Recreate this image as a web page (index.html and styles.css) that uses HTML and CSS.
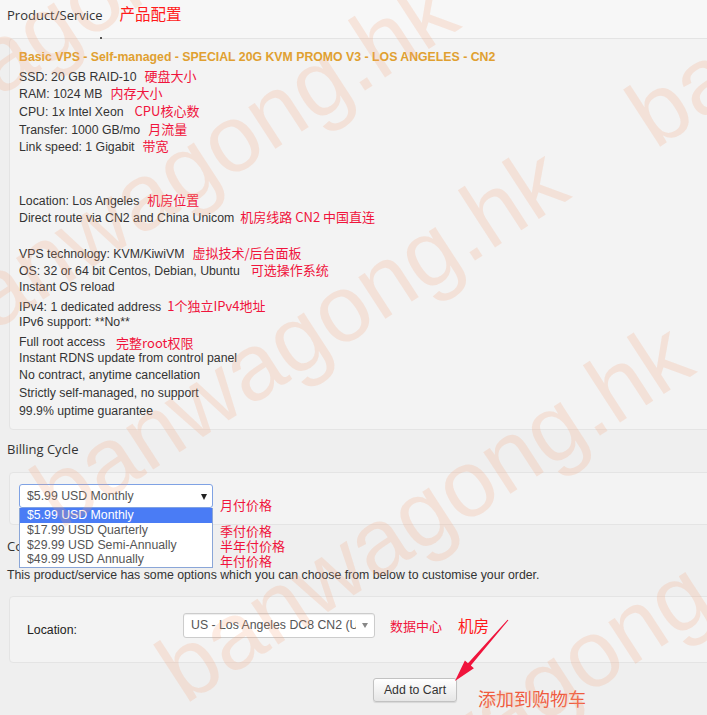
FILE: index.html
```html
<!DOCTYPE html>
<html lang="en">
<head>
<meta charset="utf-8">
<title>Product/Service</title>
<link rel="stylesheet" href="styles.css">
</head>
<body>
<div class="page">
  <div class="head">
    <h2 class="sec-title">Product/Service<span class="note note-head">产品配置</span></h2>
  </div>

  <div class="panel desc">
    <div class="line title">Basic VPS - Self-managed - SPECIAL 20G KVM PROMO V3 - LOS ANGELES - CN2</div>
    <div class="line">SSD: 20 GB RAID-10<span class="note">硬盘大小</span></div>
    <div class="line">RAM: 1024 MB<span class="note">内存大小</span></div>
    <div class="line">CPU: 1x Intel Xeon<span class="note wide">CPU核心数</span></div>
    <div class="line">Transfer: 1000 GB/mo<span class="note">月流量</span></div>
    <div class="line">Link speed: 1 Gigabit<span class="note">带宽</span></div>
    <div class="line"></div>
    <div class="line"></div>
    <div class="line">Location: Los Angeles<span class="note">机房位置</span></div>
    <div class="line">Direct route via CN2 and China Unicom<span class="note narrow">机房线路 CN2 中国直连</span></div>
    <div class="line"></div>
    <div class="line">VPS technology: KVM/KiwiVM<span class="note">虚拟技术/后台面板</span></div>
    <div class="line">OS: 32 or 64 bit Centos, Debian, Ubuntu<span class="note wide">可选操作系统</span></div>
    <div class="line">Instant OS reload</div>
    <div class="line">IPv4: 1 dedicated address<span class="note narrow">1个独立IPv4地址</span></div>
    <div class="line">IPv6 support: **No**</div>
    <div class="line">Full root access<span class="note wide low">完整root权限</span></div>
    <div class="line">Instant RDNS update from control panel</div>
    <div class="line">No contract, anytime cancellation</div>
    <div class="line">Strictly self-managed, no support</div>
    <div class="line">99.9% uptime guarantee</div>
  </div>

  <h2 class="sec-title billing-title">Billing Cycle</h2>
  <div class="panel billing">
    <div class="select-wrap">
      <div class="select select-focus">$5.99 USD Monthly<span class="caret"></span></div>
      <ul class="dropdown">
        <li class="opt opt-sel">$5.99 USD Monthly</li>
        <li class="opt">$17.99 USD Quarterly</li>
        <li class="opt">$29.99 USD Semi-Annually</li>
        <li class="opt">$49.99 USD Annually</li>
      </ul>
      <div class="price-notes">
        <span class="note">月付价格</span>
        <span class="note gap">季付价格</span>
        <span class="note">半年付价格</span>
        <span class="note">年付价格</span>
      </div>
    </div>
  </div>

  <h2 class="sec-title config-title">Configurable Options</h2>
  <p class="intro">This product/service has some options which you can choose from below to customise your order.</p>

  <div class="panel options">
    <div class="opt-label">Location:</div>
    <div class="select select-plain"><span class="select-text">US - Los Angeles DC8 CN2 (USA)</span><span class="caret caret-grey"></span></div>
    <span class="note dc-note">数据中心</span>
    <span class="note room-note">机房</span>
  </div>

  <div class="actions">
    <button class="btn" type="button">Add to Cart</button>
    <span class="note cart-note">添加到购物车</span>
  </div>

  <svg class="overlay" width="707" height="715" viewBox="0 0 707 715" aria-hidden="true">
    <g class="watermark" font-family="Liberation Sans, Arial, sans-serif" font-size="94">
      <text x="-190" y="220" transform="rotate(-33 -190 220)">banwagong.hk</text>
      <text x="-50" y="360" transform="rotate(-33 -50 360)">banwagong.hk</text>
      <text x="60" y="530" transform="rotate(-33 60 530)">banwagong.hk</text>
      <text x="185" y="705" transform="rotate(-33 185 705)">banwagong.hk</text>
      <text x="310" y="875" transform="rotate(-33 310 875)">banwagong.hk</text>
      <text x="655" y="150" transform="rotate(-33 655 150)">banwagong.hk</text>
    </g>
    <circle cx="101" cy="38" r="1" fill="#222"/>
    <polygon class="arrow" points="508.4,620.3 470.8,665.6 473.9,668.3 455,681 464.9,660.5 468,663.2 507.6,619.7"/>
  </svg>
</div>
</body>
</html>
```

FILE: styles.css
```css
html, body {
  margin: 0;
  padding: 0;
}

body {
  background: #efefef;
  overflow: hidden;
  font-family: "Liberation Sans", Arial, sans-serif;
  font-size: 12.3px;
  color: #333;
}

.page {
  position: relative;
  width: 830px;
  height: 715px;
}

.head {
  background: #f7f7f7;
  height: 38px;
}

.sec-title {
  margin: 0;
  padding-left: 7px;
  font-family: "Open Sans", "Noto Sans", sans-serif;
  font-weight: 400;
  font-size: 13px;
  line-height: 20px;
  color: #333;
}

.head .sec-title {
  padding-top: 3px;
}

.note {
  font-family: "Noto Sans CJK SC", sans-serif;
  font-size: 13px;
  color: #f0143c;
  margin-left: 8px;
}

.note.wide { margin-left: 11px; }
.note.narrow { margin-left: 6px; }
.note.low { position: relative; top: 2px; }

.note-head {
  font-size: 15.5px;
  color: #ff1a1a;
  margin-left: 17px;
}

.panel {
  margin: 0 9px;
  background: #f3f3f3;
  border: 1px solid #e4e4e4;
  border-radius: 4px;
}

.desc {
  padding: 10px 9px 9px;
}

.line {
  height: 17.7px;
  line-height: 17.7px;
  white-space: nowrap;
}

.title {
  font-weight: bold;
  color: #e0a030;
}

.billing-title {
  margin-top: 9px;
  margin-bottom: 13px;
}

.billing {
  padding: 11px 9px 16px;
}

.select-wrap {
  position: relative;
  width: 194px;
}

.select {
  position: relative;
  box-sizing: border-box;
  background: #fff;
  border-radius: 3px;
  color: #555;
  white-space: nowrap;
}

.select-focus {
  width: 194px;
  height: 24px;
  line-height: 22px;
  padding-left: 7px;
  border: 1px solid #7fa2e4;
}

.caret {
  position: absolute;
  right: 5px;
  top: 9px;
  width: 0;
  height: 0;
  border-left: 3.5px solid transparent;
  border-right: 3.5px solid transparent;
  border-top: 6px solid #222;
}

.caret-grey {
  border-top-color: #888;
  border-left-width: 3px;
  border-right-width: 3px;
  border-top-width: 5px;
  right: 6px;
  top: 9px;
}

.dropdown {
  position: absolute;
  top: 24px;
  left: 0;
  box-sizing: border-box;
  width: 194px;
  margin: 0;
  padding: 0;
  list-style: none;
  background: #fff;
  border: 1px solid #8aa6d8;
  border-top: 0;
  z-index: 2;
}

.opt {
  height: 14.67px;
  line-height: 14.67px;
  padding-left: 7px;
  color: #555;
  white-space: nowrap;
}

.opt-sel {
  background: #4a7cf5;
  color: #fff;
}

.price-notes {
  position: absolute;
  left: 201px;
  top: 14px;
  display: flex;
  flex-direction: column;
  z-index: 2;
}

.price-notes .note {
  margin-left: 0;
  line-height: 14.67px;
  white-space: nowrap;
}

.price-notes .note.gap {
  margin-top: 11.3px;
}

.config-title {
  margin-top: 11px;
}

.intro {
  margin: 11px 0 0;
  padding-left: 7px;
  line-height: 16px;
}

.options {
  margin-top: 13px;
  display: flex;
  align-items: flex-start;
  padding: 16px 10px 24px 17px;
}

.opt-label {
  width: 156px;
  margin-top: 9px;
  line-height: 16px;
  color: #222;
}

.select-plain {
  width: 192px;
  height: 25px;
  line-height: 23px;
  border: 1px solid #ccc;
  box-shadow: inset 0 1px 1px rgba(0, 0, 0, 0.075);
  padding-left: 7px;
  padding-right: 18px;
}

.select-text {
  display: block;
  overflow: hidden;
  white-space: nowrap;
}

.dc-note {
  margin-left: 15px;
  line-height: 25px;
  height: 25px;
}

.room-note {
  margin-left: 16px;
  font-size: 15.5px;
  color: #ff1a1a;
  line-height: 25px;
  height: 25px;
}

.actions {
  position: relative;
  margin-top: 15px;
  text-align: center;
  line-height: 0;
}

.btn {
  width: 84px;
  height: 24px;
  padding: 0;
  font-family: "Liberation Sans", Arial, sans-serif;
  font-size: 12.3px;
  line-height: 22px;
  color: #333;
  background: linear-gradient(#ffffff, #e6e6e6);
  border: 1px solid #c2c2c2;
  border-radius: 3px;
  box-shadow: 0 1px 1px rgba(0, 0, 0, 0.1);
}

.cart-note {
  position: absolute;
  left: calc(50% + 63px);
  top: 8px;
  margin-left: 0;
  font-size: 18px;
  line-height: 24px;
  color: #ef5b3f;
}

.overlay {
  position: absolute;
  left: 0;
  top: 0;
  pointer-events: none;
  z-index: 5;
}

.watermark text {
  fill: #f5a27a;
  fill-opacity: 0.22;
}

.arrow {
  fill: #f0143c;
}
```
